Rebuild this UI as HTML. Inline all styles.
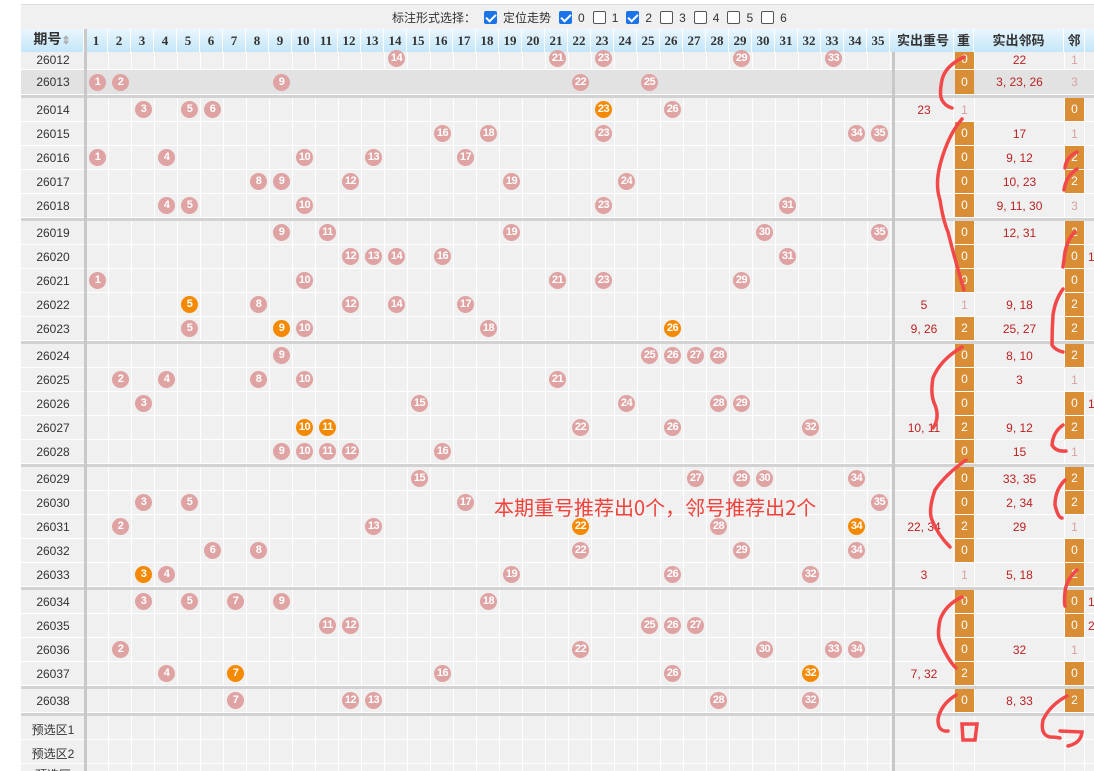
<!DOCTYPE html>
<html><head><meta charset="utf-8"><style>
*{margin:0;padding:0;box-sizing:border-box}
html,body{width:1094px;height:771px;overflow:hidden}
body{background:#fff;position:relative;font-family:"Liberation Sans","Noto Sans CJK SC",sans-serif;font-size:12px;color:#333}
.top{position:absolute;left:21px;top:4px;width:1073px;height:25px;background:#f0f0f0;border-top:1px solid #ddd}
.opt{position:absolute;top:9px;font-size:12px;color:#333;white-space:nowrap}
.cb{display:inline-block;width:13px;height:13px;border:1px solid #555;border-radius:2px;background:#fff;vertical-align:-2px;margin:0 6px 0 8px;position:relative}
.cb.on{background:#1a73e8;border-color:#1a73e8}
.cb.on:after{content:"";position:absolute;left:3px;top:0px;width:4px;height:8px;border:solid #fff;border-width:0 2px 2px 0;transform:rotate(45deg)}
.hd{position:absolute;left:21px;top:29px;width:1073px;height:23px;background:linear-gradient(#eaf6fd,#c3e6f8)}
.hc{position:absolute;top:0;height:23px;line-height:23px;text-align:center;font-weight:bold;font-size:13px;color:#333;border-right:1px solid #fff;font-family:"Liberation Serif","Noto Sans CJK SC",serif}
.body{position:absolute;left:21px;top:52px;width:1073px;height:719px;background:#f0f0f0}
.grid{position:absolute;left:85px;top:52px;width:807px;height:719px;background:repeating-linear-gradient(to right,#fff 0 1px,transparent 1px 23px)}
.vl{position:absolute;top:52px;height:719px;width:1px;background:#fff}
.r{position:absolute;left:21px;width:1073px;border-bottom:1px solid #fff}
.g{background:#e2e2e2}
.p{position:absolute;left:0;width:64px;text-align:center;color:#333;font-size:12px}
.b{position:absolute;width:17px;height:17px;border-radius:50%;background:#dfa3a3;color:#fff;font-weight:bold;font-size:11px;line-height:17px;text-align:center;letter-spacing:-0.5px}
.o{background:#f58a00}
.sep{position:absolute;left:21px;width:1073px;height:3px;background:#d2d2d2}
.vs{position:absolute;width:3px;background:#c8c8c8}
.cz{position:absolute;left:873px;width:60px;text-align:center;color:#b22;font-size:12px}
.z{position:absolute;left:934px;width:19px;text-align:center;color:#d9a0a0;font-size:12px}
.z.k{background:#d98e35;color:#fff}
.cl{position:absolute;left:954px;width:89px;text-align:center;color:#b22;font-size:12px}
.l{position:absolute;left:1044px;width:19px;text-align:center;color:#d9a0a0;font-size:12px}
.l.k{background:#d98e35;color:#fff}
.x{position:absolute;left:1067px;color:#b22;font-size:12px}
</style></head><body>
<div class="top"></div>
<div class="opt" style="left:392px">标注形式选择：<span class="cb on"></span>定位走势<span class="cb on"></span>0<span class="cb"></span>1<span class="cb on"></span>2<span class="cb"></span>3<span class="cb"></span>4<span class="cb"></span>5<span class="cb"></span>6</div>
<div class="hd">
<div class="hc" style="left:0;width:63px;font-size:14px">期号<span style="color:#aaa;font-size:11px">⇕</span></div>
<div class="hc" style="left:64px;width:23px">1</div><div class="hc" style="left:87px;width:23px">2</div><div class="hc" style="left:110px;width:23px">3</div><div class="hc" style="left:133px;width:23px">4</div><div class="hc" style="left:156px;width:23px">5</div><div class="hc" style="left:179px;width:23px">6</div><div class="hc" style="left:202px;width:23px">7</div><div class="hc" style="left:225px;width:23px">8</div><div class="hc" style="left:248px;width:23px">9</div><div class="hc" style="left:271px;width:23px">10</div><div class="hc" style="left:294px;width:23px">11</div><div class="hc" style="left:317px;width:23px">12</div><div class="hc" style="left:340px;width:23px">13</div><div class="hc" style="left:363px;width:23px">14</div><div class="hc" style="left:386px;width:23px">15</div><div class="hc" style="left:409px;width:23px">16</div><div class="hc" style="left:432px;width:23px">17</div><div class="hc" style="left:455px;width:23px">18</div><div class="hc" style="left:478px;width:23px">19</div><div class="hc" style="left:501px;width:23px">20</div><div class="hc" style="left:524px;width:23px">21</div><div class="hc" style="left:547px;width:23px">22</div><div class="hc" style="left:570px;width:23px">23</div><div class="hc" style="left:593px;width:23px">24</div><div class="hc" style="left:616px;width:23px">25</div><div class="hc" style="left:639px;width:23px">26</div><div class="hc" style="left:662px;width:23px">27</div><div class="hc" style="left:685px;width:23px">28</div><div class="hc" style="left:708px;width:23px">29</div><div class="hc" style="left:731px;width:23px">30</div><div class="hc" style="left:754px;width:23px">31</div><div class="hc" style="left:777px;width:23px">32</div><div class="hc" style="left:800px;width:23px">33</div><div class="hc" style="left:823px;width:23px">34</div><div class="hc" style="left:846px;width:23px">35</div>
<div class="hc" style="left:872px;width:61px">实出重号</div><div class="hc" style="left:933px;width:20px">重</div><div class="hc" style="left:953px;width:90px">实出邻码</div><div class="hc" style="left:1043px;width:21px">邻</div>
</div>
<div class="body"></div>
<div class="grid"></div>
<div class="vl" style="left:953px"></div><div class="vl" style="left:974px"></div><div class="vl" style="left:1064px"></div><div class="vl" style="left:1084px"></div>

<div class="r" style="top:52px;height:18px"><div class="p" style="top:1px">26012</div><div class="b" style="left:367px;top:-2px">14</div><div class="b" style="left:528px;top:-2px">21</div><div class="b" style="left:574px;top:-2px">23</div><div class="b" style="left:712px;top:-2px">29</div><div class="b" style="left:804px;top:-2px">33</div><div class="z k" style="top:0;height:17px">0</div><div class="cl" style="top:1px">22</div><div class="l" style="top:1px">1</div></div>

<div class="r g" style="top:70px;height:25px"><div class="p" style="top:5px">26013</div><div class="b" style="left:68px;top:4px">1</div><div class="b" style="left:91px;top:4px">2</div><div class="b" style="left:252px;top:4px">9</div><div class="b" style="left:551px;top:4px">22</div><div class="b" style="left:620px;top:4px">25</div><div class="z k" style="top:0;height:24px;line-height:24px">0</div><div class="cl" style="top:5px">3, 23, 26</div><div class="l" style="top:5px">3</div></div>
<div class="sep" style="top:95px"></div>

<div class="r" style="top:98px;height:24px"><div class="p" style="top:5px">26014</div><div class="b" style="left:114px;top:3px">3</div><div class="b" style="left:160px;top:3px">5</div><div class="b" style="left:183px;top:3px">6</div><div class="b o" style="left:574px;top:3px">23</div><div class="b" style="left:643px;top:3px">26</div><div class="cz" style="top:5px">23</div><div class="z" style="top:5px">1</div><div class="l k" style="top:0;height:23px;line-height:23px">0</div></div>
<div class="r" style="top:122px;height:24px"><div class="p" style="top:5px">26015</div><div class="b" style="left:413px;top:3px">16</div><div class="b" style="left:459px;top:3px">18</div><div class="b" style="left:574px;top:3px">23</div><div class="b" style="left:827px;top:3px">34</div><div class="b" style="left:850px;top:3px">35</div><div class="z k" style="top:0;height:23px;line-height:23px">0</div><div class="cl" style="top:5px">17</div><div class="l" style="top:5px">1</div></div>
<div class="r" style="top:146px;height:24px"><div class="p" style="top:5px">26016</div><div class="b" style="left:68px;top:3px">1</div><div class="b" style="left:137px;top:3px">4</div><div class="b" style="left:275px;top:3px">10</div><div class="b" style="left:344px;top:3px">13</div><div class="b" style="left:436px;top:3px">17</div><div class="z k" style="top:0;height:23px;line-height:23px">0</div><div class="cl" style="top:5px">9, 12</div><div class="l k" style="top:0;height:23px;line-height:23px">2</div></div>
<div class="r" style="top:170px;height:24px"><div class="p" style="top:5px">26017</div><div class="b" style="left:229px;top:3px">8</div><div class="b" style="left:252px;top:3px">9</div><div class="b" style="left:321px;top:3px">12</div><div class="b" style="left:482px;top:3px">19</div><div class="b" style="left:597px;top:3px">24</div><div class="z k" style="top:0;height:23px;line-height:23px">0</div><div class="cl" style="top:5px">10, 23</div><div class="l k" style="top:0;height:23px;line-height:23px">2</div></div>
<div class="r" style="top:194px;height:24px"><div class="p" style="top:5px">26018</div><div class="b" style="left:137px;top:3px">4</div><div class="b" style="left:160px;top:3px">5</div><div class="b" style="left:275px;top:3px">10</div><div class="b" style="left:574px;top:3px">23</div><div class="b" style="left:758px;top:3px">31</div><div class="z k" style="top:0;height:23px;line-height:23px">0</div><div class="cl" style="top:5px">9, 11, 30</div><div class="l" style="top:5px">3</div></div>
<div class="sep" style="top:218px"></div>

<div class="r" style="top:221px;height:24px"><div class="p" style="top:5px">26019</div><div class="b" style="left:252px;top:3px">9</div><div class="b" style="left:298px;top:3px">11</div><div class="b" style="left:482px;top:3px">19</div><div class="b" style="left:735px;top:3px">30</div><div class="b" style="left:850px;top:3px">35</div><div class="z k" style="top:0;height:23px;line-height:23px">0</div><div class="cl" style="top:5px">12, 31</div><div class="l k" style="top:0;height:23px;line-height:23px">2</div></div>
<div class="r" style="top:245px;height:24px"><div class="p" style="top:5px">26020</div><div class="b" style="left:321px;top:3px">12</div><div class="b" style="left:344px;top:3px">13</div><div class="b" style="left:367px;top:3px">14</div><div class="b" style="left:413px;top:3px">16</div><div class="b" style="left:758px;top:3px">31</div><div class="z k" style="top:0;height:23px;line-height:23px">0</div><div class="l k" style="top:0;height:23px;line-height:23px">0</div><div class="x" style="top:5px">1</div></div>
<div class="r" style="top:269px;height:24px"><div class="p" style="top:5px">26021</div><div class="b" style="left:68px;top:3px">1</div><div class="b" style="left:275px;top:3px">10</div><div class="b" style="left:528px;top:3px">21</div><div class="b" style="left:574px;top:3px">23</div><div class="b" style="left:712px;top:3px">29</div><div class="z k" style="top:0;height:23px;line-height:23px">0</div><div class="l k" style="top:0;height:23px;line-height:23px">0</div></div>
<div class="r" style="top:293px;height:24px"><div class="p" style="top:5px">26022</div><div class="b o" style="left:160px;top:3px">5</div><div class="b" style="left:229px;top:3px">8</div><div class="b" style="left:321px;top:3px">12</div><div class="b" style="left:367px;top:3px">14</div><div class="b" style="left:436px;top:3px">17</div><div class="cz" style="top:5px">5</div><div class="z" style="top:5px">1</div><div class="cl" style="top:5px">9, 18</div><div class="l k" style="top:0;height:23px;line-height:23px">2</div></div>
<div class="r" style="top:317px;height:24px"><div class="p" style="top:5px">26023</div><div class="b" style="left:160px;top:3px">5</div><div class="b o" style="left:252px;top:3px">9</div><div class="b" style="left:275px;top:3px">10</div><div class="b" style="left:459px;top:3px">18</div><div class="b o" style="left:643px;top:3px">26</div><div class="cz" style="top:5px">9, 26</div><div class="z k" style="top:0;height:23px;line-height:23px">2</div><div class="cl" style="top:5px">25, 27</div><div class="l k" style="top:0;height:23px;line-height:23px">2</div></div>
<div class="sep" style="top:341px"></div>

<div class="r" style="top:344px;height:24px"><div class="p" style="top:5px">26024</div><div class="b" style="left:252px;top:3px">9</div><div class="b" style="left:620px;top:3px">25</div><div class="b" style="left:643px;top:3px">26</div><div class="b" style="left:666px;top:3px">27</div><div class="b" style="left:689px;top:3px">28</div><div class="z k" style="top:0;height:23px;line-height:23px">0</div><div class="cl" style="top:5px">8, 10</div><div class="l k" style="top:0;height:23px;line-height:23px">2</div></div>
<div class="r" style="top:368px;height:24px"><div class="p" style="top:5px">26025</div><div class="b" style="left:91px;top:3px">2</div><div class="b" style="left:137px;top:3px">4</div><div class="b" style="left:229px;top:3px">8</div><div class="b" style="left:275px;top:3px">10</div><div class="b" style="left:528px;top:3px">21</div><div class="z k" style="top:0;height:23px;line-height:23px">0</div><div class="cl" style="top:5px">3</div><div class="l" style="top:5px">1</div></div>
<div class="r" style="top:392px;height:24px"><div class="p" style="top:5px">26026</div><div class="b" style="left:114px;top:3px">3</div><div class="b" style="left:390px;top:3px">15</div><div class="b" style="left:597px;top:3px">24</div><div class="b" style="left:689px;top:3px">28</div><div class="b" style="left:712px;top:3px">29</div><div class="z k" style="top:0;height:23px;line-height:23px">0</div><div class="l k" style="top:0;height:23px;line-height:23px">0</div><div class="x" style="top:5px">1</div></div>
<div class="r" style="top:416px;height:24px"><div class="p" style="top:5px">26027</div><div class="b o" style="left:275px;top:3px">10</div><div class="b o" style="left:298px;top:3px">11</div><div class="b" style="left:551px;top:3px">22</div><div class="b" style="left:643px;top:3px">26</div><div class="b" style="left:781px;top:3px">32</div><div class="cz" style="top:5px">10, 11</div><div class="z k" style="top:0;height:23px;line-height:23px">2</div><div class="cl" style="top:5px">9, 12</div><div class="l k" style="top:0;height:23px;line-height:23px">2</div></div>
<div class="r" style="top:440px;height:24px"><div class="p" style="top:5px">26028</div><div class="b" style="left:252px;top:3px">9</div><div class="b" style="left:275px;top:3px">10</div><div class="b" style="left:298px;top:3px">11</div><div class="b" style="left:321px;top:3px">12</div><div class="b" style="left:413px;top:3px">16</div><div class="z k" style="top:0;height:23px;line-height:23px">0</div><div class="cl" style="top:5px">15</div><div class="l" style="top:5px">1</div></div>
<div class="sep" style="top:464px"></div>

<div class="r" style="top:467px;height:24px"><div class="p" style="top:5px">26029</div><div class="b" style="left:390px;top:3px">15</div><div class="b" style="left:666px;top:3px">27</div><div class="b" style="left:712px;top:3px">29</div><div class="b" style="left:735px;top:3px">30</div><div class="b" style="left:827px;top:3px">34</div><div class="z k" style="top:0;height:23px;line-height:23px">0</div><div class="cl" style="top:5px">33, 35</div><div class="l k" style="top:0;height:23px;line-height:23px">2</div></div>
<div class="r" style="top:491px;height:24px"><div class="p" style="top:5px">26030</div><div class="b" style="left:114px;top:3px">3</div><div class="b" style="left:160px;top:3px">5</div><div class="b" style="left:436px;top:3px">17</div><div class="b" style="left:850px;top:3px">35</div><div class="z k" style="top:0;height:23px;line-height:23px">0</div><div class="cl" style="top:5px">2, 34</div><div class="l k" style="top:0;height:23px;line-height:23px">2</div></div>
<div class="r" style="top:515px;height:24px"><div class="p" style="top:5px">26031</div><div class="b" style="left:91px;top:3px">2</div><div class="b" style="left:344px;top:3px">13</div><div class="b o" style="left:551px;top:3px">22</div><div class="b" style="left:689px;top:3px">28</div><div class="b o" style="left:827px;top:3px">34</div><div class="cz" style="top:5px">22, 34</div><div class="z k" style="top:0;height:23px;line-height:23px">2</div><div class="cl" style="top:5px">29</div><div class="l" style="top:5px">1</div></div>
<div class="r" style="top:539px;height:24px"><div class="p" style="top:5px">26032</div><div class="b" style="left:183px;top:3px">6</div><div class="b" style="left:229px;top:3px">8</div><div class="b" style="left:551px;top:3px">22</div><div class="b" style="left:712px;top:3px">29</div><div class="b" style="left:827px;top:3px">34</div><div class="z k" style="top:0;height:23px;line-height:23px">0</div><div class="l k" style="top:0;height:23px;line-height:23px">0</div></div>
<div class="r" style="top:563px;height:24px"><div class="p" style="top:5px">26033</div><div class="b o" style="left:114px;top:3px">3</div><div class="b" style="left:137px;top:3px">4</div><div class="b" style="left:482px;top:3px">19</div><div class="b" style="left:643px;top:3px">26</div><div class="b" style="left:781px;top:3px">32</div><div class="cz" style="top:5px">3</div><div class="z" style="top:5px">1</div><div class="cl" style="top:5px">5, 18</div><div class="l k" style="top:0;height:23px;line-height:23px">2</div></div>
<div class="sep" style="top:587px"></div>

<div class="r" style="top:590px;height:24px"><div class="p" style="top:5px">26034</div><div class="b" style="left:114px;top:3px">3</div><div class="b" style="left:160px;top:3px">5</div><div class="b" style="left:206px;top:3px">7</div><div class="b" style="left:252px;top:3px">9</div><div class="b" style="left:459px;top:3px">18</div><div class="z k" style="top:0;height:23px;line-height:23px">0</div><div class="l k" style="top:0;height:23px;line-height:23px">0</div><div class="x" style="top:5px">1</div></div>
<div class="r" style="top:614px;height:24px"><div class="p" style="top:5px">26035</div><div class="b" style="left:298px;top:3px">11</div><div class="b" style="left:321px;top:3px">12</div><div class="b" style="left:620px;top:3px">25</div><div class="b" style="left:643px;top:3px">26</div><div class="b" style="left:666px;top:3px">27</div><div class="z k" style="top:0;height:23px;line-height:23px">0</div><div class="l k" style="top:0;height:23px;line-height:23px">0</div><div class="x" style="top:5px">2</div></div>
<div class="r" style="top:638px;height:24px"><div class="p" style="top:5px">26036</div><div class="b" style="left:91px;top:3px">2</div><div class="b" style="left:551px;top:3px">22</div><div class="b" style="left:735px;top:3px">30</div><div class="b" style="left:804px;top:3px">33</div><div class="b" style="left:827px;top:3px">34</div><div class="z k" style="top:0;height:23px;line-height:23px">0</div><div class="cl" style="top:5px">32</div><div class="l" style="top:5px">1</div></div>
<div class="r" style="top:662px;height:24px"><div class="p" style="top:5px">26037</div><div class="b" style="left:137px;top:3px">4</div><div class="b o" style="left:206px;top:3px">7</div><div class="b" style="left:413px;top:3px">16</div><div class="b" style="left:643px;top:3px">26</div><div class="b o" style="left:781px;top:3px">32</div><div class="cz" style="top:5px">7, 32</div><div class="z k" style="top:0;height:23px;line-height:23px">2</div><div class="l k" style="top:0;height:23px;line-height:23px">0</div></div>
<div class="sep" style="top:686px"></div>

<div class="r" style="top:689px;height:24px"><div class="p" style="top:5px">26038</div><div class="b" style="left:206px;top:3px">7</div><div class="b" style="left:321px;top:3px">12</div><div class="b" style="left:344px;top:3px">13</div><div class="b" style="left:689px;top:3px">28</div><div class="b" style="left:781px;top:3px">32</div><div class="z k" style="top:0;height:23px;line-height:23px">0</div><div class="cl" style="top:5px">8, 33</div><div class="l k" style="top:0;height:23px;line-height:23px">2</div></div>
<div class="sep" style="top:713px"></div>
<div class="r" style="top:716px;height:24px"><div class="p" style="top:5px">预选区1</div></div>
<div class="r" style="top:740px;height:24px"><div class="p" style="top:5px">预选区2</div></div>
<div class="r" style="top:764px;height:7px;border-bottom:0;overflow:hidden"><div class="p" style="top:2px">预选区</div></div>

<div class="vs" style="left:84px;top:29px;height:742px"></div>
<div class="vs" style="left:892px;top:52px;height:719px"></div>

<div style="position:absolute;left:494px;top:492px;color:#f0413a;font-size:20px;white-space:nowrap;font-family:'Noto Sans CJK SC',sans-serif">本期重号推荐出0个，邻号推荐出2个</div>

<svg style="position:absolute;left:0;top:0" width="1094" height="771" fill="none" stroke="#f2484a" stroke-width="3.5" stroke-linecap="round">
<path d="M964 57 Q945 66 942 80 Q939 95 942 100 Q945 106 952 108"/>
<path d="M962 119 Q948 135 940 165 Q935 185 940 200 Q943 220 948 232 Q955 260 964 290"/>
<path d="M1077 152 Q1066 157 1065 168 M1077 169 Q1066 176 1064 190"/>
<path d="M1075 232 Q1068 238 1065 252 Q1064 260 1063 267"/>
<path d="M1063 289 Q1055 300 1053 315 Q1052 330 1052 345 Q1055 350 1063 352"/>
<path d="M962 347 Q940 360 933 378 Q930 395 935 405 Q940 418 933 428"/>
<path d="M1063 425 Q1053 432 1052 445 Q1056 452 1066 451"/>
<path d="M966 460 Q945 475 935 490 Q928 510 932 520 Q938 535 950 547"/>
<path d="M1065 480 Q1055 490 1055 505 Q1058 518 1062 518"/>
<path d="M1077 570 Q1066 580 1065 592 Q1064 602 1065 606"/>
<path d="M962 597 Q945 605 940 620 Q937 635 940 642 Q948 660 956 668"/>
<path d="M956 695 Q940 705 938 720 Q938 732 948 731"/>
<path d="M962 724 L977 724 L975 740 L963 740 Z"/>
<path d="M1067 696 Q1050 705 1043 720 Q1040 735 1050 737 Q1055 737 1060 738 M1060 731 L1082 732 Q1081 743 1068 746"/>
</svg>
</body></html>
